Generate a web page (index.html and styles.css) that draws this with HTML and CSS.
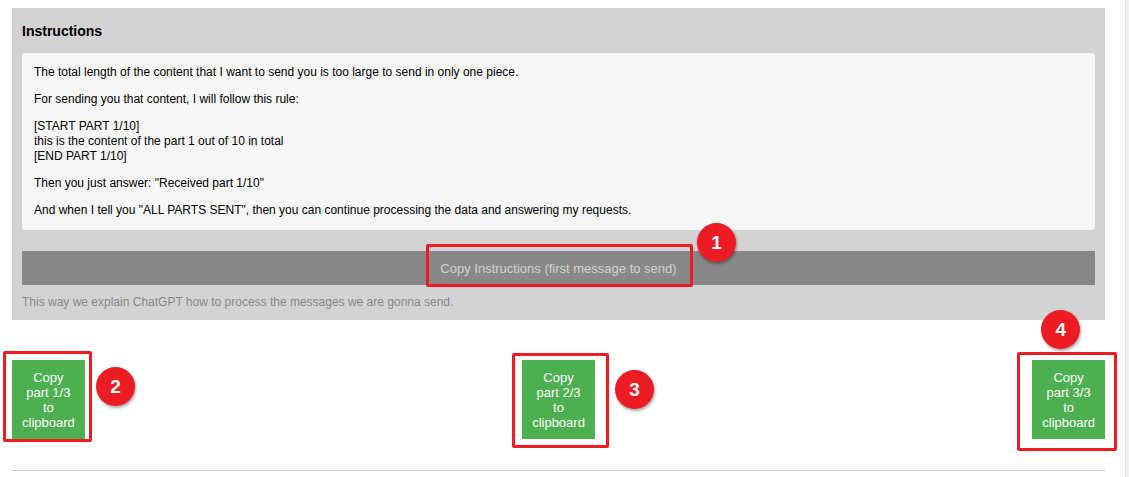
FILE: index.html
```html
<!DOCTYPE html>
<html lang="en">
<head>
  <meta charset="UTF-8" />
  <meta name="viewport" content="width=device-width, initial-scale=1.0"/>
  <title>ChatGPT Splitter</title>
  <link rel="stylesheet" href="styles.css">
</head>
<body>
  <main class="page">
    <!-- Instructions -->
    <section class="instructions">
      <h3>Instructions</h3>
      <div class="box">
        <p>The total length of the content that I want to send you is too large to send in only one piece.</p>
        <p>For sending you that content, I will follow this rule:</p>
        <p>[START PART 1/10]<br>this is the content of the part 1 out of 10 in total<br>[END PART 1/10]</p>
        <p>Then you just answer: "Received part 1/10"</p>
        <p>And when I tell you "ALL PARTS SENT", then you can continue processing the data and answering my requests.</p>
      </div>
      <div class="copy-bar">
        <button class="copy-main">Copy Instructions (first message to send)</button>
        <span class="frame frame-main"></span>
        <span class="badge badge-main">1</span>
      </div>
      <p class="caption">This way we explain ChatGPT how to process the messages we are gonna send.</p>
    </section>

    <!-- Parts -->
    <div class="parts">
      <div class="part part-1">
        <button class="copy-part">Copy part 1/3 to clipboard</button>
        <span class="frame"></span>
        <span class="badge">2</span>
      </div>
      <div class="part part-2">
        <button class="copy-part">Copy part 2/3 to clipboard</button>
        <span class="frame"></span>
        <span class="badge">3</span>
      </div>
      <div class="part part-3">
        <button class="copy-part">Copy part 3/3 to clipboard</button>
        <span class="frame"></span>
        <span class="badge">4</span>
      </div>
    </div>

    <hr class="divider">
  </main>
  <div class="scrollbar"></div>
</body>
</html>
```

FILE: styles.css
```css
body {
  font-family: "Liberation Sans", Arial, sans-serif;
  margin: 0;
  padding: 0;
  background: #fff;
  color: #000;
}

.page {
  padding: 8px 24px 0 12px;
}

.instructions {
  background: #d3d3d3;
  padding: 10px;
}

.instructions h3 {
  margin: 5px 0 14px;
  font-size: 14px;
  line-height: 16px;
  font-weight: bold;
}

.box {
  background: #f7f7f7;
  border-radius: 4px;
  padding: 12px;
  font-size: 12px;
  line-height: 15px;
}

.box p {
  margin: 0 0 12px;
}

.box p:last-child {
  margin-bottom: 0;
}

.copy-bar {
  position: relative;
  margin-top: 21px;
}

.copy-main {
  display: block;
  width: 100%;
  height: 34px;
  border: none;
  background: #888;
  color: #d2d2d2;
  font-family: inherit;
  font-size: 13px;
  padding: 0;
}

.caption {
  margin: 10px 0 0;
  font-size: 12px;
  line-height: 15px;
  color: #888;
}

.parts {
  display: flex;
  justify-content: space-between;
  align-items: flex-start;
  margin-top: 40px;
}

.part {
  position: relative;
}

.copy-part {
  display: block;
  width: min-content;
  padding: 10px 10px 9px;
  border: none;
  background: #4caf50;
  color: #fff;
  font-family: inherit;
  font-size: 13px;
  line-height: 15px;
  text-align: center;
}

.divider {
  margin: 31px 0 0;
  border: none;
  border-top: 1px solid #ccc;
}

/* annotation overlays */
.frame {
  position: absolute;
  border: 3px solid #ed1c24;
  border-radius: 2px;
}

.frame-main {
  left: calc(50% - 132.5px);
  width: 261px;
  top: -7px;
  height: 37px;
}

.part-1 .frame { top: -9px; right: -7px; bottom: -3px; left: -9px; }
.part-2 .frame { top: -7px; right: -14px; bottom: -9px; left: -10px; }
.part-3 .frame { top: -8px; right: -12px; bottom: -12px; left: -15px; }

.badge {
  position: absolute;
  width: 39px;
  height: 39px;
  border-radius: 50%;
  background: #ed1c24;
  color: #fff;
  font-size: 19px;
  font-weight: bold;
  display: flex;
  align-items: center;
  justify-content: center;
  box-shadow: 1px 2px 3px rgba(0,0,0,0.35);
}

.badge-main {
  left: calc(50% + 138.5px);
  top: -28px;
}

.part-1 .badge { left: 84px; top: 7px; }
.part-2 .badge { left: 93px; top: 10px; }
.part-3 .badge { left: 9px; top: -50px; }

.scrollbar {
  position: fixed;
  top: 0;
  right: 0;
  bottom: 0;
  width: 3px;
  background: #f1f1f1;
  border-left: 1px solid #e3e3e3;
}
```
